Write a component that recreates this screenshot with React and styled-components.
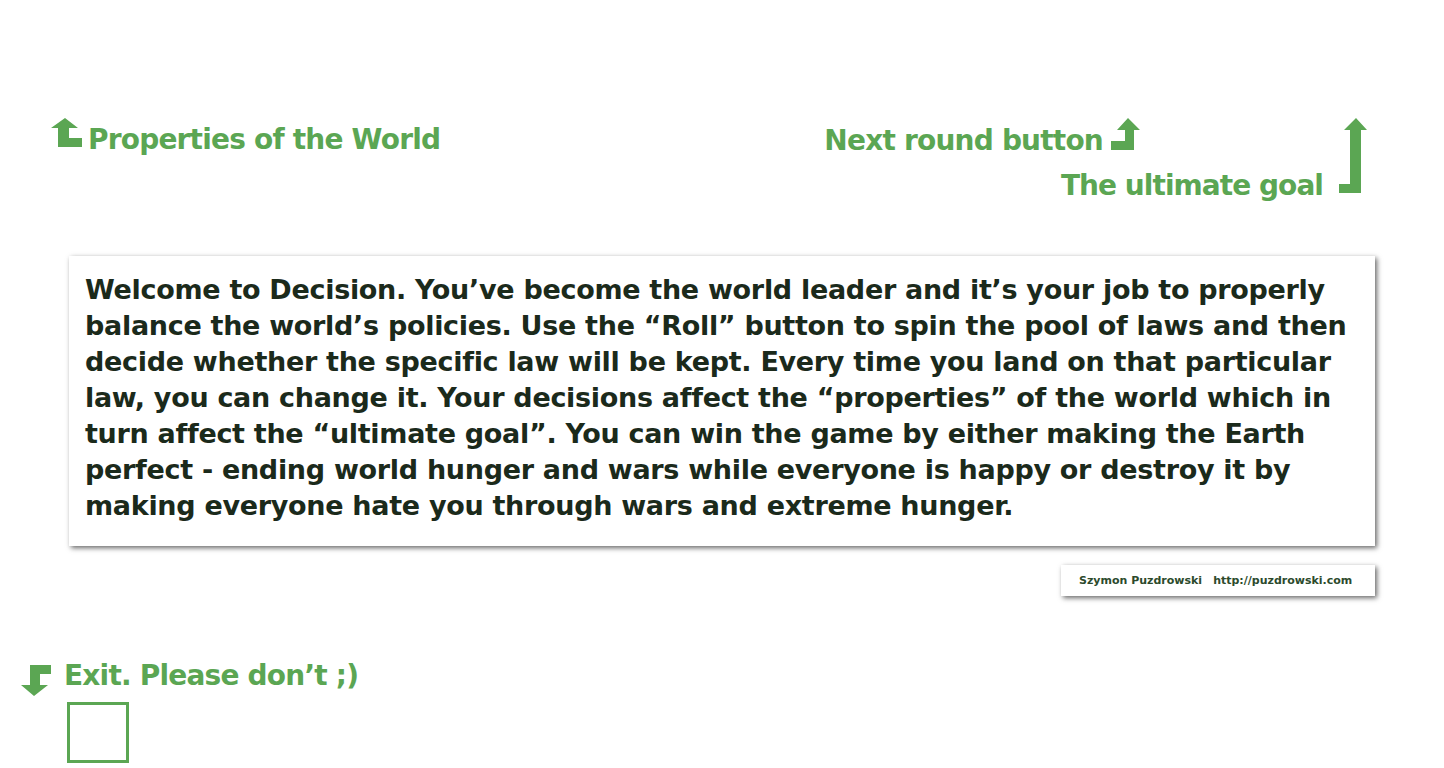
import React from "react";
import styled, { createGlobalStyle } from "styled-components";

const Global = createGlobalStyle`
  html, body { margin: 0; padding: 0; background: #ffffff; }
  body { font-family: "DejaVu Sans", Verdana, sans-serif; }
`;

const GREEN = "#5ba653";

const Page = styled.div`
  width: 1444px;
  height: 768px;
  display: flex;
  flex-direction: column;
  overflow: hidden;
`;

const TopRow = styled.div`
  display: flex;
  justify-content: space-between;
  align-items: flex-start;
  margin-top: 118px;
  padding-left: 51px;
  padding-right: 76px;
`;

const Label = styled.div`
  display: flex;
  align-items: flex-end;
  gap: ${(p) => p.$gap ?? 8}px;
  color: ${GREEN};
  font-weight: bold;
  font-size: 28px;
  letter-spacing: ${(p) => p.$ls ?? -0.8}px;
  line-height: 1;
  white-space: nowrap;
`;

const LabelText = styled.span`
  display: block;
  margin-bottom: ${(p) => p.$mb || 0}px;
`;

const RightGroup = styled.div`
  display: flex;
  align-items: flex-start;
  gap: 16px;
`;

const RightColumn = styled.div`
  display: flex;
  flex-direction: column;
  align-items: flex-end;
`;

const NextRow = styled(Label)`
  margin-right: 182px;
`;

const GoalRow = styled(Label)`
  margin-top: 22px;
`;

const Arrow = styled.svg`
  display: block;
  flex: none;
`;

const Box = styled.div`
  margin: ${(p) => p.$mt}px 69px 0 69px;
  width: 1306px;
  height: 290px;
  box-sizing: border-box;
  background: #fff;
  box-shadow: 2px 2px 5px rgba(0, 0, 0, 0.6);
  padding: 16px 16px 0 16px;
`;

const Intro = styled.p`
  margin: 0;
  color: #1b2a1b;
  font-weight: bold;
  font-size: 27px;
  line-height: 36px;
  letter-spacing: -0.3px;
`;

const CreditRow = styled.div`
  display: flex;
  justify-content: flex-end;
  margin: 19px 69px 0 0;
`;

const Credit = styled.div`
  width: 314px;
  height: 31px;
  box-sizing: border-box;
  background: #fff;
  box-shadow: 2px 2px 5px rgba(0, 0, 0, 0.6);
  display: flex;
  align-items: center;
  padding-left: 18px;
  gap: 11px;
  color: #2c4a2c;
  font-size: 11px;
  font-weight: bold;
  letter-spacing: 0;
`;

const ExitSection = styled.div`
  display: flex;
  flex-direction: column;
  margin-top: 66px;
  padding-left: 21px;
`;

const ExitButton = styled.div`
  margin: 6px 0 0 46px;
  width: 62px;
  height: 61px;
  box-sizing: border-box;
  border: 3px solid ${GREEN};
`;

const UpLeftArrow = () => (
  <Arrow width="31" height="30" viewBox="0 0 31 30">
    <polygon fill={GREEN} points="14,0 27,10 18,10 18,20 31,20 31,29 7,29 7,10 0,10" />
  </Arrow>
);

const UpFootArrow = () => (
  <Arrow width="30" height="32" viewBox="0 0 30 32">
    <polygon fill={GREEN} points="17,0 29,12 23,12 23,32 0,32 0,23 14,23 14,12 6,12" />
  </Arrow>
);

const TallArrow = () => (
  <Arrow width="29" height="75" viewBox="0 0 29 75">
    <polygon fill={GREEN} points="17,0 28,12 22,12 22,75 0,75 0,66 11,66 11,12 5,12" />
  </Arrow>
);

const DownArrow = () => (
  <Arrow width="30" height="31" viewBox="0 0 30 31">
    <polygon fill={GREEN} points="8,0 30,0 30,9 19,9 19,20 27,20 13,31 0,20 9,20 9,0" />
  </Arrow>
);

export default function App() {
  return (
    <Page>
      <Global />
      <TopRow>
        <Label $gap={6}>
          <UpLeftArrow />
          <LabelText $mb={-6}>Properties of the World</LabelText>
        </Label>
        <RightGroup>
          <RightColumn>
            <NextRow $gap={8}>
              <LabelText $mb={-5}>Next round button</LabelText>
              <UpFootArrow />
            </NextRow>
            <GoalRow $ls={-0.95}>
              <LabelText $mb={-6}>The ultimate goal</LabelText>
            </GoalRow>
          </RightColumn>
          <TallArrow />
        </RightGroup>
      </TopRow>
      <Box $mt={62}>
        <Intro>
          Welcome to Decision. You’ve become the world leader and it’s your job to properly
          balance the world’s policies. Use the “Roll” button to spin the pool of laws and then
          decide whether the specific law will be kept. Every time you land on that particular
          law, you can change it. Your decisions affect the “properties” of the world which in
          turn affect the “ultimate goal”. You can win the game by either making the Earth
          perfect - ending world hunger and wars while everyone is happy or destroy it by
          making everyone hate you through wars and extreme hunger.
        </Intro>
      </Box>
      <CreditRow>
        <Credit>
          <span>Szymon Puzdrowski</span>
          <span>http://puzdrowski.com</span>
        </Credit>
      </CreditRow>
      <ExitSection>
        <Label $gap={13}>
          <DownArrow />
          <LabelText $mb={6}>Exit. Please don’t ;)</LabelText>
        </Label>
        <ExitButton />
      </ExitSection>
    </Page>
  );
}
